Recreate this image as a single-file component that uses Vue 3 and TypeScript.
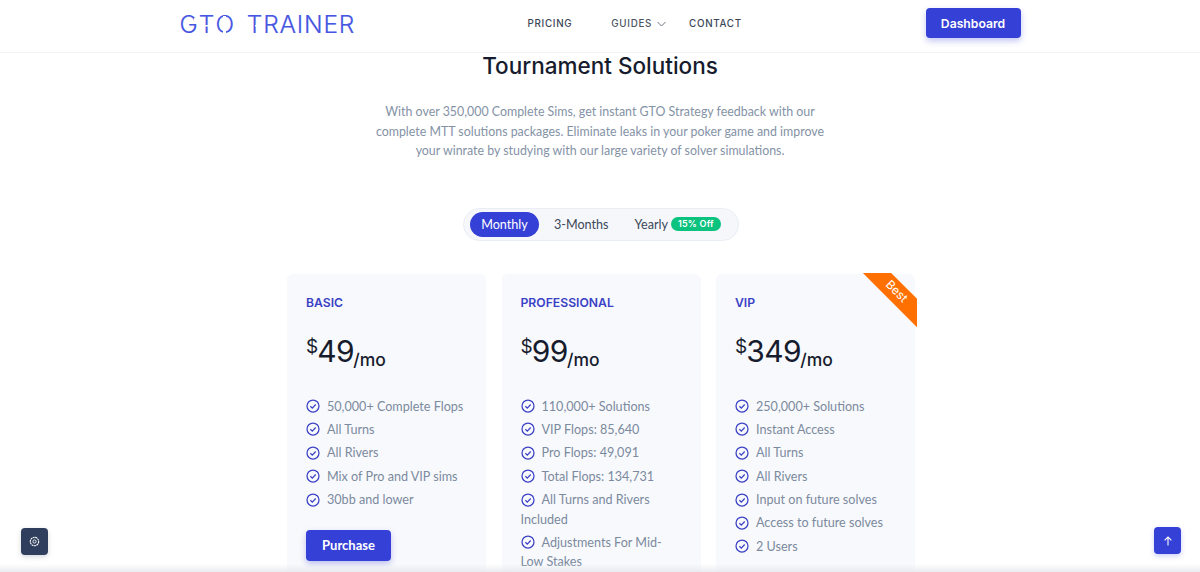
<script setup lang="ts">
interface Plan { name: string; price: string; items: string[]; best?: boolean; button?: boolean }
const plans: Plan[] = [
  { name: 'BASIC', price: '49', button: true, items: ['50,000+ Complete Flops', 'All Turns', 'All Rivers', 'Mix of Pro and VIP sims', '30bb and lower'] },
  { name: 'PROFESSIONAL', price: '99', items: ['110,000+ Solutions', 'VIP Flops: 85,640', 'Pro Flops: 49,091', 'Total Flops: 134,731', 'All Turns and Rivers Included', 'Adjustments For Mid-Low Stakes'] },
  { name: 'VIP', price: '349', best: true, items: ['250,000+ Solutions', 'Instant Access', 'All Turns', 'All Rivers', 'Input on future solves', 'Access to future solves', '2 Users'] },
]
</script>

<template>
  <div class="page">
    <header class="nav">
      <div class="nav-inner">
        <div class="logo"><span class="gto">GTO</span><span class="logo-gap"></span>TRAINER</div>
        <nav class="links">
          <a class="link">PRICING</a>
          <a class="link guides">GUIDES
            <svg width="9" height="6" viewBox="0 0 9 6" fill="none" stroke="#6b7280" stroke-width="1"><path d="M.5 1l4 4 4-4" /></svg>
          </a>
          <a class="link contact">CONTACT</a>
        </nav>
        <button class="dash">Dashboard</button>
      </div>
    </header>

    <main class="main">
      <h1 class="title">Tournament Solutions</h1>
      <p class="intro">With over 350,000 Complete Sims, get instant GTO Strategy feedback with our complete MTT solutions packages. Eliminate leaks in your poker game and improve your winrate by studying with our large variety of solver simulations.</p>

      <div class="toggle">
        <span class="opt active">Monthly</span>
        <span class="opt months">3-Months</span>
        <span class="opt yearly">Yearly <em class="off">15% Off</em></span>
      </div>

      <section class="cards">
        <article v-for="p in plans" :key="p.name" class="card">
          <div v-if="p.best" class="ribbon"><span class="band">Best</span></div>
          <h2 class="plan">{{ p.name }}</h2>
          <div class="price"><sup class="cur">$</sup><span class="amt">{{ p.price }}</span><span class="per">/mo</span></div>
          <ul class="list">
            <li v-for="it in p.items" :key="it" class="item">
              <svg class="check" width="14" height="14" viewBox="0 0 14 14" fill="none" stroke="#3a41c6" stroke-width="1.25"><circle cx="7" cy="7" r="6" /><path d="M4.4 7.2l1.9 1.9 3.4-3.6" /></svg>{{ it }}
            </li>
          </ul>
          <button v-if="p.button" class="buy">Purchase</button>
        </article>
      </section>
    </main>

    <div class="fade"></div>
    <button class="float settings" aria-label="Settings">
      <svg width="11" height="11" viewBox="0 0 11 11" fill="none" stroke="#fff" stroke-width="1.1"><circle cx="5.5" cy="5.5" r="4.2" stroke-dasharray="2 .5" /><circle cx="5.5" cy="5.5" r="1.6" stroke-width=".9" /></svg>
    </button>
    <button class="float top" aria-label="Back to top">
      <svg width="10" height="10" viewBox="0 0 10 10" fill="none" stroke="#fff" stroke-width="1.1"><path d="M5 9.5V1M1.6 4.4L5 1l3.4 3.4" /></svg>
    </button>
  </div>
</template>

<style>
html, body { margin: 0; overflow: hidden; background: #fff; }
</style>

<style scoped>
.page { position: relative; height: 572px; overflow: hidden; background: #fff; font-family: "Lato", sans-serif; }
.nav { height: 52px; border-bottom: 1px solid #f1f3f6; box-sizing: content-box; }
.nav-inner { width: 841px; margin: 0 auto; height: 100%; display: flex; align-items: center; }
.logo { position: relative; font: 300 24.5px "Inter", sans-serif; letter-spacing: .8px; color: #4656e2; width: 348px; display: flex; align-items: center; white-space: nowrap; -webkit-text-stroke: .2px #4656e2; margin-top: -5px; }
.gto { letter-spacing: 1.8px; }
.logo::after {
  content: ""; position: absolute; left: 0; top: 3px; width: 178px; height: 24px;
  background:
    linear-gradient(#fff, #fff) 43px 4px / 3px 4px no-repeat,
    linear-gradient(#fff, #fff) 43px 17px / 3px 4px no-repeat,
    linear-gradient(#fff, #fff) 14px 6px / 4px 3px no-repeat,
    linear-gradient(#fff, #fff) 24px 13px / 5px 1.5px no-repeat,
    linear-gradient(#fff, #fff) 75px 13px / 4px 1.5px no-repeat,
    linear-gradient(#fff, #fff) 122px 13px / 4px 1.5px no-repeat;
}
.logo-gap { width: 11px; }
.links { display: flex; align-items: center; flex: 1; font: 500 9.8px "Inter", sans-serif; letter-spacing: .7px; color: #3c4658; margin-top: -5px; }
.link { white-space: nowrap; }
.guides { margin-left: 39px; display: flex; align-items: center; gap: 5px; color: #4b5563; }
.contact { margin-left: 23px; }
.dash { width: 95px; height: 30px; margin-top: -6px; border: 0; border-radius: 4px; background: #3540d6; color: #fff; font: 600 12.2px "Inter", sans-serif; box-shadow: 0 3px 6px rgba(53,64,214,.3); padding: 0; }
.main { display: flex; flex-direction: column; align-items: center; }
.title { margin: -2px 0 0; font: 500 22.5px/29px "Inter", sans-serif; color: #161c2d; height: 29px; }
.intro { margin: 22px 0 0; width: 460px; font-size: 12.4px; line-height: 19.5px; color: #8492a6; text-align: center; }
.toggle { margin: 47px 0 0 2px; width: 276px; height: 33px; box-sizing: border-box; border: 1px solid #e9edf4; border-radius: 17px; background: #f6f7fb; display: flex; align-items: center; padding-left: 6px; font-size: 12.6px; color: #3c4858; }
.opt { white-space: nowrap; }
.active { width: 69px; height: 25px; border-radius: 13px; background: #3540d6; color: #fff; display: flex; align-items: center; justify-content: center; }
.months { margin-left: 15px; }
.yearly { margin-left: 26px; display: flex; align-items: center; gap: 3px; }
.off { font: 600 9px/12px "Inter", sans-serif; font-style: normal; background: #0bc27f; color: #fff; border-radius: 7px; padding: 1px 7px; letter-spacing: .2px; }
.cards { margin: 33px 0 0 2px; display: flex; gap: 15.5px; width: 628px; justify-content: center; align-items: flex-start; }
.card { position: relative; flex: 0 0 199px; height: 330px; box-sizing: border-box; padding: 21px 19px; background: #f8f9fc; border-radius: 6px; }
.plan { margin: 0; font: 600 12.2px/15px "Inter", sans-serif; color: #3a41c6; }
.price { margin-top: 21px; height: 40px; display: flex; align-items: flex-end; color: #161c2d; font-family: "Inter", sans-serif; }
.cur { font-size: 19px; line-height: 22px; align-self: flex-start; margin: 5px -1px 0 0; }
.amt { font-size: 30px; line-height: 40px; letter-spacing: -.5px; }
.per { font-size: 17.5px; line-height: 22px; font-weight: 500; margin-left: -1px; }
.list { list-style: none; margin: 26px 0 0; padding: 0; font-size: 12.6px; line-height: 19.5px; color: #7b8a9e; }
.item { margin-bottom: 3.9px; }
.check { vertical-align: -2.5px; margin-right: 7px; }
.buy { display: block; margin-top: 20px; width: 85px; height: 31px; padding: 0; border: 0; border-radius: 4px; background: #3540d6; color: #fff; font: 700 13px "Lato", sans-serif; box-shadow: 0 3px 6px rgba(53,64,214,.3); }
.ribbon { position: absolute; top: -1px; right: -2px; width: 57px; height: 57px; overflow: hidden; }
.band { position: absolute; top: 9.5px; right: -26.5px; width: 96px; height: 20px; background: #ff7000; color: #fff; font: 400 12px/17px "Inter", sans-serif; text-align: center; transform: rotate(45deg); }
.fade { position: absolute; left: 0; right: 0; bottom: 0; height: 8px; background: linear-gradient(to bottom, rgba(240,241,245,0), rgba(230,232,238,.85)); }
.float { position: absolute; width: 27px; height: 27px; padding: 0; border: 0; border-radius: 4px; display: flex; align-items: center; justify-content: center; }
.settings { left: 21px; top: 528px; background: #2f3e5c; box-shadow: 0 2px 5px rgba(47,62,92,.2); }
.top { left: 1154px; top: 527px; background: #3540d6; box-shadow: 0 2px 5px rgba(53,64,214,.25); }
</style>
